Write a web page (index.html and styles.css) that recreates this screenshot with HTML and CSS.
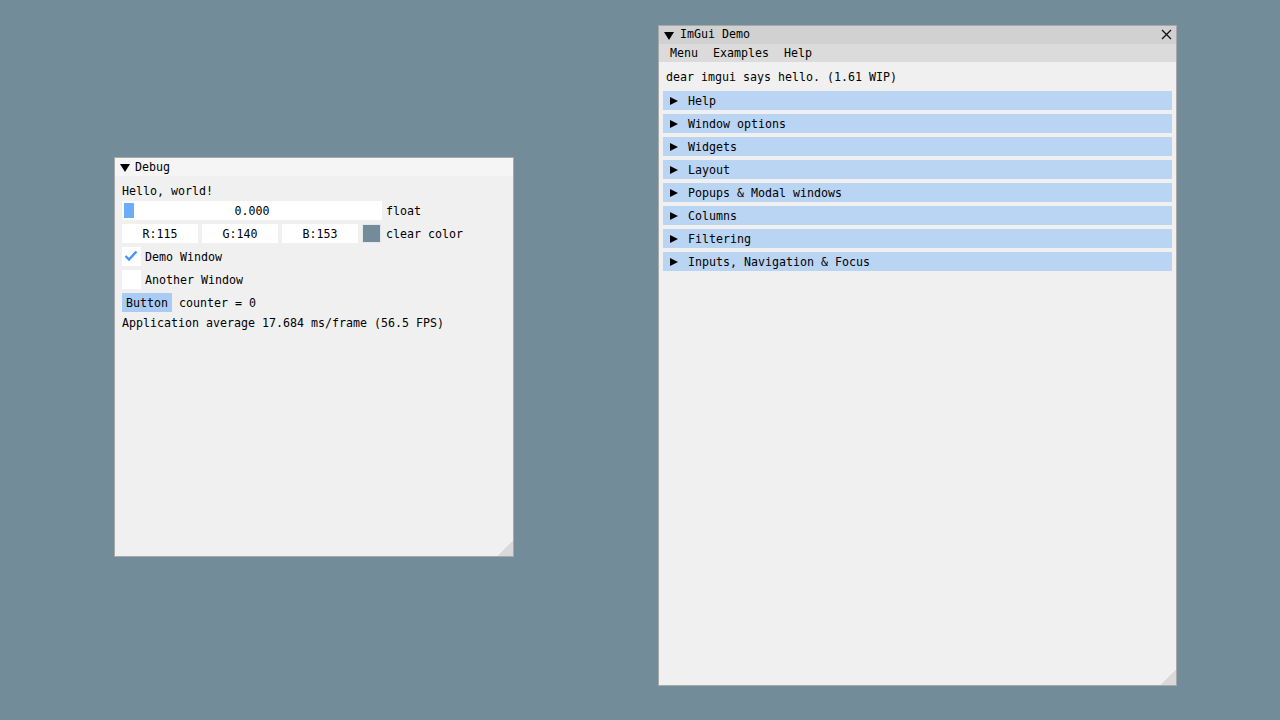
FILE: index.html
```html
<!DOCTYPE html>
<html>
<head>
<meta charset="utf-8">
<link rel="stylesheet" href="styles.css">
</head>
<body>
<div class="desk">
  <div class="win debug">
    <div class="title"><span class="tri-down"></span><span>Debug</span></div>
    <div class="content">
      <div class="text">Hello, world!</div>
      <div class="row">
        <div class="frame slider"><span class="grab"></span>0.000</div>
        <span class="label">float</span>
      </div>
      <div class="row">
        <div class="frame field">R:115</div>
        <div class="frame field">G:140</div>
        <div class="frame field">B:153</div>
        <div class="swatch"></div>
        <span class="label after-swatch">clear color</span>
      </div>
      <div class="row">
        <div class="frame check"><svg width="19" height="19" viewBox="0 0 19 19"><polyline points="3.5,9 7,12.5 14.5,4.5" fill="none" stroke="#4296fa" stroke-width="2.4"/></svg></div>
        <span class="label">Demo Window</span>
      </div>
      <div class="row">
        <div class="frame check"></div>
        <span class="label">Another Window</span>
      </div>
      <div class="row">
        <div class="button">Button</div>
        <span class="label wide">counter = 0</span>
      </div>
      <div class="text">Application average 17.684 ms/frame (56.5 FPS)</div>
    </div>
    <div class="grip"></div>
  </div>

  <div class="win demo">
    <div class="title active"><span class="tri-down"></span><span class="ttext">ImGui Demo</span>
      <svg class="close" width="11" height="11" viewBox="0 0 11 11"><path d="M1 1L10 10M10 1L1 10" stroke="#111" stroke-width="1.3" fill="none"/></svg>
    </div>
    <div class="menubar"><span class="menu">Menu</span><span class="menu">Examples</span><span class="menu">Help</span></div>
    <div class="content">
      <div class="text spaced">dear imgui says hello. (1.61 WIP)</div>
      <div class="header"><span class="tri-right"></span><span class="htext">Help</span></div>
      <div class="header"><span class="tri-right"></span><span class="htext">Window options</span></div>
      <div class="header"><span class="tri-right"></span><span class="htext">Widgets</span></div>
      <div class="header"><span class="tri-right"></span><span class="htext">Layout</span></div>
      <div class="header"><span class="tri-right"></span><span class="htext">Popups &amp; Modal windows</span></div>
      <div class="header"><span class="tri-right"></span><span class="htext">Columns</span></div>
      <div class="header"><span class="tri-right"></span><span class="htext">Filtering</span></div>
      <div class="header"><span class="tri-right"></span><span class="htext">Inputs, Navigation &amp; Focus</span></div>
    </div>
    <div class="grip"></div>
  </div>
</div>
</body>
</html>
```

FILE: styles.css
```css
html, body {
  margin: 0;
  padding: 0;
}
body {
  background: #738c99;
  width: 1280px;
  height: 720px;
  overflow: hidden;
  font-family: "DejaVu Sans Mono", "Liberation Mono", monospace;
  font-size: 11.63px;
  line-height: 13px;
  color: #000;
}
.desk {
  position: relative;
  width: 1280px;
  height: 720px;
}
.win {
  position: absolute;
  box-sizing: border-box;
  border: 1px solid #a8a8a8;
  background: #f0f0f0;
  display: flex;
  flex-direction: column;
}
.debug {
  left: 114px;
  top: 157px;
  width: 400px;
  height: 400px;
}
.demo {
  left: 658px;
  top: 25px;
  width: 519px;
  height: 661px;
}
.title {
  height: 18px;
  background: #f5f5f5;
  display: flex;
  align-items: center;
  padding-left: 5px;
  position: relative;
}
.title.active {
  background: #d1d1d1;
}
.tri-down {
  width: 0;
  height: 0;
  border-left: 5px solid transparent;
  border-right: 5px solid transparent;
  border-top: 8px solid #000;
  margin-right: 5px;
  margin-top: 1px;
}
.demo .ttext {
  margin-left: 1px;
  padding-bottom: 2px;
}
.close {
  position: absolute;
  right: 4px;
  top: 3px;
}
.menubar {
  height: 18px;
  background: #dbdbdb;
  display: flex;
  align-items: center;
  padding-left: 11px;
}
.menu {
  margin-right: 15px;
}
.content {
  padding: 8px 8px 0 7px;
  display: flex;
  flex-direction: column;
  gap: 4px;
}
.text {
  height: 13px;
  padding-top: 1px;
  box-sizing: border-box;
  white-space: pre;
}
.text.spaced {
  margin-bottom: 4px;
}
.row {
  display: flex;
  align-items: center;
  height: 19px;
  gap: 4px;
}
.frame {
  background: #fff;
  height: 19px;
  padding-top: 1px;
  line-height: 18px;
  text-align: center;
  box-sizing: border-box;
}
.slider {
  width: 260px;
  position: relative;
}
.grab {
  position: absolute;
  left: 2px;
  top: 2px;
  width: 10px;
  height: 15px;
  background: #6cadfb;
}
.field {
  width: 76px;
}
.swatch {
  width: 19px;
  height: 19px;
  box-sizing: border-box;
  background: #738c99;
  border: 1px solid #e4e8ea;
}
.check {
  width: 19px;
  padding-top: 0;
}
.check svg {
  display: block;
}
.label {
  white-space: pre;
  padding-top: 2px;
}
.label.after-swatch {
  margin-left: 1px;
}
.label.wide {
  margin-left: 3px;
}
.button {
  background: #aaccf4;
  height: 19px;
  box-sizing: border-box;
  padding: 1px 4px 0 4px;
  line-height: 18px;
}
.header {
  height: 19px;
  background: #bad4f3;
  margin: 0 -4px 0 -3px;
  display: flex;
  align-items: center;
  padding-left: 7px;
  white-space: pre;
}
.htext {
  padding-top: 2px;
}
.tri-right {
  width: 0;
  height: 0;
  border-top: 4.5px solid transparent;
  border-bottom: 4.5px solid transparent;
  border-left: 8px solid #000;
  margin-right: 10px;
}
.grip {
  position: absolute;
  right: 0;
  bottom: 0;
  width: 15px;
  height: 15px;
  background: linear-gradient(135deg, transparent 50%, #d9d9d9 50%);
}
```
